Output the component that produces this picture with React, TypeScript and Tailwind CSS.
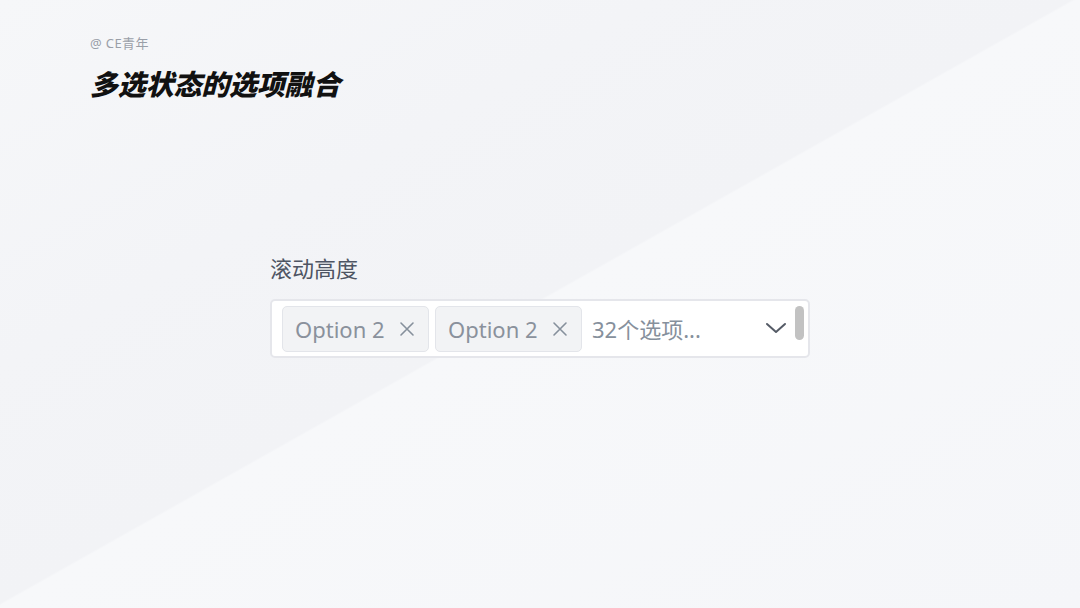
import React from "react";

function XIcon() {
  return (
    <svg width="16" height="16" viewBox="0 0 16 16" fill="none" stroke="#86909c" strokeWidth="1.6" strokeLinecap="round">
      <path d="M2 2 L14 14 M14 2 L2 14" />
    </svg>
  );
}

function Tag() {
  return (
    <div className="flex h-[46px] w-[147px] shrink-0 items-center rounded-[5px] border border-[#e3e5ea] bg-[#f2f3f5] pl-[12px]">
      <span className="text-[22px] leading-none text-[#8a919c]">Option 2</span>
      <span className="ml-[14px] flex items-center">
        <XIcon />
      </span>
    </div>
  );
}

export default function App() {
  return (
    <div
      className="relative h-[608px] w-[1080px] overflow-hidden bg-[#f4f5f8]"
      style={{ fontFamily: '"Noto Sans", "Noto Sans CJK SC", sans-serif' }}
    >
      <div className="absolute inset-0 bg-[linear-gradient(to_bottom_right,#f6f7f9_0%,#f3f4f7_30%,#f2f3f6_49.6%,#f7f8fa_49.8%,#f5f6f9_100%)]" />
      <div className="relative flex flex-col pl-[90px] pt-[35px]">
        <div className="text-[13px] leading-[16px] tracking-[0.4px] text-[#9a9fa8]">@ CE青年</div>
        <div className="mt-[13px] text-[28px] font-black italic leading-[40px] tracking-[-0.2px] text-[#111]">
          多选状态的选项融合
        </div>
      </div>
      <div className="relative ml-[270px] mt-[149px] flex w-[540px] flex-col">
        <div className="text-[22px] leading-[30px] text-[#4e5563]">滚动高度</div>
        <div className="mt-[16px] flex h-[59px] items-center rounded-[5px] border-2 border-[#e5e6eb] bg-white pl-[10px] pr-[4px]">
          <div className="flex items-center gap-[6px]">
            <Tag />
            <Tag />
          </div>
          <span className="ml-[10px] text-[22px] leading-none text-[#86909c]">32个选项...</span>
          <div className="ml-auto flex h-full items-start">
            <svg className="mt-[20px]" width="22" height="14" viewBox="0 0 22 14" fill="none" stroke="#555b66" strokeWidth="2" strokeLinecap="round" strokeLinejoin="round">
              <path d="M2 3 L11 11 L20 3" />
            </svg>
            <div className="ml-[8px] mt-[5px] h-[34px] w-[9px] rounded-full bg-[#c2c2c2]" />
          </div>
        </div>
      </div>
    </div>
  );
}
